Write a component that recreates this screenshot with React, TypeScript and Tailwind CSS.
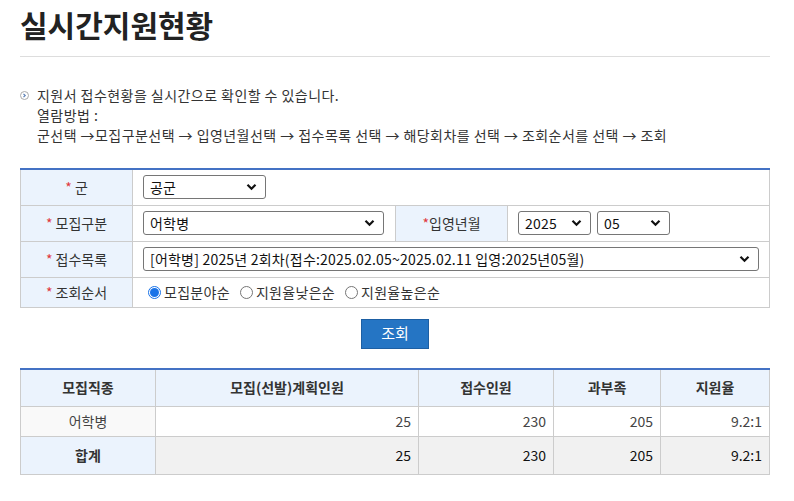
import React from "react";

const font = { fontFamily: '"Noto Sans CJK KR", "Noto Sans", sans-serif' };

function Chevron() {
  return (
    <svg width="11" height="8" viewBox="0 0 11 8" className="pointer-events-none absolute right-[8px] top-1/2 -translate-y-1/2">
      <path d="M1.5 1.8 L5.5 5.8 L9.5 1.8" fill="none" stroke="#111" strokeWidth="2.2" />
    </svg>
  );
}

function Sel({ value, w, h = "h-[24px]" }: { value: string; w: string; h?: string }) {
  return (
    <div className={`relative ${w} ${h} border border-[#767676] rounded-[3px] bg-white flex items-center pl-[6px] text-[14px] text-[#111] tracking-[0.2px]`}>
      <span className="whitespace-nowrap">{value}</span>
      <Chevron />
    </div>
  );
}

function Label({ children }: { children: React.ReactNode }) {
  return (
    <td className="w-[112px] bg-[#ebf3fd] border border-[#cccccc] text-center text-[14px] text-[#333]">
      {children}
    </td>
  );
}

function Radio({ checked, label }: { checked?: boolean; label: string }) {
  return (
    <label className="flex items-center gap-[3px] text-[14px] text-[#333] tracking-[0.3px]">
      {checked ? (
        <span className="w-[13px] h-[13px] rounded-full border border-[#1a73e8] flex items-center justify-center">
          <span className="w-[9px] h-[9px] rounded-full bg-[#1a73e8]" />
        </span>
      ) : (
        <span className="w-[13px] h-[13px] rounded-full border border-[#767676] bg-white" />
      )}
      <span>{label}</span>
    </label>
  );
}

export default function App() {
  return (
    <div className="w-[794px] h-[501px] bg-white px-[20px] overflow-hidden" style={font}>
      <div className="w-[750px]">
        <h1 className="text-[30px] font-bold leading-[40px] mt-[4px] text-[#222]">실시간지원현황</h1>
        <div className="mt-[12px] border-b border-[#dddddd]" />
        <div className="mt-[28px] text-[14px] leading-[20px] text-[#333] flex">
          <div className="w-[17px] pt-[6px]">
            <svg width="9" height="9" viewBox="0 0 9 9">
              <circle cx="4.5" cy="4.5" r="4" fill="#fff" stroke="#aaa" strokeWidth="1" />
              <path d="M3.5 2.8 L5.2 4.5 L3.5 6.2" fill="none" stroke="#5b7fb5" strokeWidth="1.2" />
            </svg>
          </div>
          <div className="tracking-[0.45px]">
            <p>지원서 접수현황을 실시간으로 확인할 수 있습니다.</p>
            <p>열람방법 :</p>
            <p>군선택 →모집구분선택 → 입영년월선택 → 접수목록 선택 → 해당회차를 선택 → 조회순서를 선택 → 조회</p>
          </div>
        </div>

        <table className="mt-[23px] w-[750px] border-collapse border-t-2 border-t-[#4472c4]">
          <tbody>
            <tr className="h-[36px]">
              <Label><span className="text-[#e0383e]">*</span> 군</Label>
              <td colSpan={3} className="border border-[#cccccc] pl-[10px]">
                <Sel value="공군" w="w-[123px]" />
              </td>
            </tr>
            <tr className="h-[36px]">
              <Label><span className="text-[#e0383e]">*</span> 모집구분</Label>
              <td className="w-[263px] border border-[#cccccc] pl-[10px]">
                <Sel value="어학병" w="w-[241px]" />
              </td>
              <Label><span className="text-[#e0383e]">*</span>입영년월</Label>
              <td className="border border-[#cccccc] pl-[10px]">
                <div className="flex gap-[6px]">
                  <Sel value="2025" w="w-[73px]" />
                  <Sel value="05" w="w-[73px]" />
                </div>
              </td>
            </tr>
            <tr className="h-[36px]">
              <Label><span className="text-[#e0383e]">*</span> 접수목록</Label>
              <td colSpan={3} className="border border-[#cccccc] pl-[10px]">
                <Sel value="[어학병] 2025년 2회차(접수:2025.02.05~2025.02.11 입영:2025년05월)" w="w-[616px]" />
              </td>
            </tr>
            <tr className="h-[30px]">
              <Label><span className="text-[#e0383e]">*</span> 조회순서</Label>
              <td colSpan={3} className="border border-[#cccccc] pl-[15px]">
                <div className="flex gap-[10px]">
                  <Radio checked label="모집분야순" />
                  <Radio label="지원율낮은순" />
                  <Radio label="지원율높은순" />
                </div>
              </td>
            </tr>
          </tbody>
        </table>

        <div className="flex justify-center mt-[11px]">
          <button className="w-[68px] h-[30px] bg-[#2575c4] border border-[#1d5fa3] text-white text-[15px]">조회</button>
        </div>

        <table className="mt-[19px] w-[750px] border-collapse border-t-2 border-t-[#4472c4] text-[14px] text-[#444]">
          <thead>
            <tr className="h-[38px] bg-[#ebf3fd] text-[#333]">
              <th className="w-[135px] border border-[#cccccc] font-bold">모집직종</th>
              <th className="w-[263px] border border-[#cccccc] font-bold">모집(선발)계획인원</th>
              <th className="w-[135px] border border-[#cccccc] font-bold">접수인원</th>
              <th className="w-[107px] border border-[#cccccc] font-bold">과부족</th>
              <th className="border border-[#cccccc] font-bold">지원율</th>
            </tr>
          </thead>
          <tbody>
            <tr className="h-[30px]">
              <td className="bg-[#f9f9f9] border border-[#cccccc] text-center">어학병</td>
              <td className="border border-[#cccccc] text-right pr-[7px]">25</td>
              <td className="border border-[#cccccc] text-right pr-[7px]">230</td>
              <td className="border border-[#cccccc] text-right pr-[7px]">205</td>
              <td className="border border-[#cccccc] text-right pr-[7px]">9.2:1</td>
            </tr>
            <tr className="h-[38px] bg-[#f1f1f1] text-[#111]">
              <td className="bg-[#ebf3fd] border border-[#cccccc] text-center font-bold text-[#333]">합계</td>
              <td className="border border-[#cccccc] text-right pr-[7px]">25</td>
              <td className="border border-[#cccccc] text-right pr-[7px]">230</td>
              <td className="border border-[#cccccc] text-right pr-[7px]">205</td>
              <td className="border border-[#cccccc] text-right pr-[7px]">9.2:1</td>
            </tr>
          </tbody>
        </table>
      </div>
    </div>
  );
}
